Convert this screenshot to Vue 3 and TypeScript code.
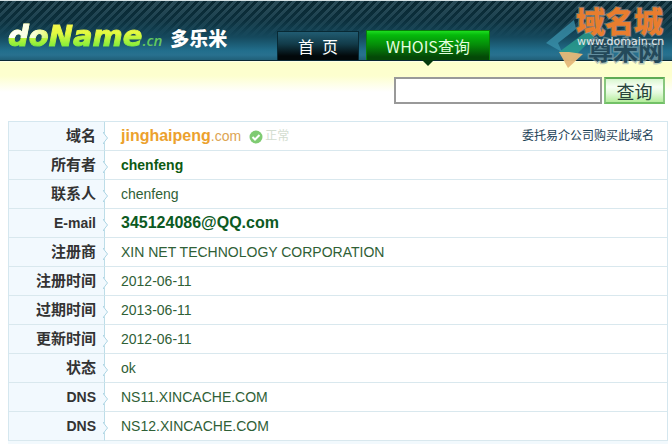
<script setup lang="ts">
import { ref } from 'vue'

interface Row {
  label: string
  value: string
  kind?: 'domain' | 'owner' | 'mail'
  latin?: boolean
}

const query = ref('')
const rows: Row[] = [
  { label: '域名', value: 'jinghaipeng', kind: 'domain' },
  { label: '所有者', value: 'chenfeng', kind: 'owner' },
  { label: '联系人', value: 'chenfeng' },
  { label: 'E-mail', value: '345124086@QQ.com', kind: 'mail', latin: true },
  { label: '注册商', value: 'XIN NET TECHNOLOGY CORPORATION' },
  { label: '注册时间', value: '2012-06-11' },
  { label: '过期时间', value: '2013-06-11' },
  { label: '更新时间', value: '2012-06-11' },
  { label: '状态', value: 'ok' },
  { label: 'DNS', value: 'NS11.XINCACHE.COM', latin: true },
  { label: 'DNS', value: 'NS12.XINCACHE.COM', latin: true },
]
</script>

<template>
  <div class="page">
    <header class="top">
      <a class="logo" href="#">
        <span class="word">doName</span><span class="tld">.cn</span>
        <span class="cname">多乐米</span>
      </a>
      <nav class="tabs">
        <a class="tab" href="#">首&ensp;页</a>
        <a class="tab active" href="#">WHOIS查询</a>
      </nav>
      <svg class="stamp" width="126" height="70" viewBox="0 0 126 70">
        <path d="M28 19L0 42l16 9-4-9 18-14z" fill="#3b93ad" opacity=".75" />
        <path d="M13 51L44 28l4 8-24 24z" fill="#2aa08f" opacity=".8" />
        <path d="M13 51h10l14 2-15 14z" fill="#e6b878" opacity=".95" />
        <text class="mark-b" x="42" y="59">尊米网</text>
        <text class="mark-a" x="30" y="32">域名城</text>
        <text class="mark-url" x="31" y="44">www.domain.cn</text>
      </svg>
    </header>

    <form class="search" @submit.prevent>
      <input v-model="query" class="field" type="text" aria-label="查询域名" />
      <button class="go" type="submit">查询</button>
    </form>

    <main class="panel">
      <table class="info">
        <tbody>
          <tr v-for="(row, i) in rows" :key="i">
            <th scope="row" :class="{ latin: row.latin }">
              {{ row.label }}
              <svg class="notch" width="6" height="12" viewBox="0 0 6 12">
                <path d="M0 0L5 6L0 12z" fill="#f2f9fe" />
                <path d="M.5 0v1l4 5-4 5v1" fill="none" stroke="#b0d6e4" />
              </svg>
            </th>
            <td>
              <div v-if="row.kind === 'domain'" class="line">
                <span class="domain"><b>{{ row.value }}</b>.com</span>
                <svg class="ok" width="14" height="14" viewBox="0 0 14 14">
                  <circle cx="7" cy="7" r="6.500" fill="#7fcb72" />
                  <path d="M3.500 7l2.500 2.500L10.500 5" fill="none" stroke="#fff" stroke-width="2" />
                </svg>
                <span class="state">正常</span>
                <a class="buy" href="#">委托易介公司购买此域名</a>
              </div>
              <span v-else :class="row.kind">{{ row.value }}</span>
            </td>
          </tr>
        </tbody>
      </table>
    </main>
  </div>
</template>

<style>
body {
  margin: 0;
  background: #fff;
}
</style>

<style scoped>
.page {
  font-family: "Liberation Sans", "Noto Sans CJK SC", sans-serif;
  font-size: 14px;
  background: linear-gradient(#fff 61px, #fdffcb 62px, #fdffcf 76px, #fff 92px);
}
a {
  text-decoration: none;
}
.top {
  position: relative;
  display: flex;
  align-items: flex-end;
  box-sizing: border-box;
  height: 61px;
  border-top: 1px solid #d5e0e3;
  border-bottom: 1px solid #0a2933;
  background:
    linear-gradient(rgba(11, 46, 59, 0) 0, rgba(13, 55, 71, 0.5) 20px, #15495d 36px, #226f8d 50px, #28718f 54px, #205f78 59px),
    repeating-linear-gradient(135deg, #0a2832 0, #0a2832 3px, #2b4c58 3px, #2b4c58 6px);
}
.logo {
  display: flex;
  align-items: baseline;
  width: 277px;
  padding-left: 8px;
  box-sizing: border-box;
  white-space: nowrap;
  line-height: 40px;
}
.word {
  font: italic bold 29px/40px "DejaVu Sans", sans-serif;
  color: transparent;
  -webkit-text-stroke: 1px transparent;
  background:
    linear-gradient(90deg, #fff 0, rgba(255, 255, 255, 0.8) 26px, rgba(255, 255, 255, 0) 46px) 0 0 / 100% 22px no-repeat,
    linear-gradient(#f6f64e 8px, #e4fa40 17px, #6eea38 33px);
  -webkit-background-clip: text;
  background-clip: text;
}
.tld {
  font: italic 600 15px/40px "Open Sans", sans-serif;
  color: #63c85e;
}
.cname {
  margin-left: 8px;
  font: 900 19px/40px "Noto Sans CJK SC", sans-serif;
  color: #fff;
}
.tabs {
  display: flex;
  align-items: flex-end;
  gap: 7px;
}
.tab {
  position: relative;
  box-sizing: border-box;
  width: 82px;
  height: 29px;
  border: 1px solid #082934;
  border-bottom: 0;
  background: linear-gradient(#215c72, #123b49 12px, #02080a 24px);
  font-family: "Noto Sans CJK SC", sans-serif;
  font-size: 16px;
  line-height: 28px;
  color: #fff;
  text-align: center;
  white-space: nowrap;
}
.tab.active {
  width: 124px;
  height: 30px;
  border-color: #087c0a;
  background: linear-gradient(#1ddd20, #05b90b 4px, #058b09 14px, #044807 26px);
  line-height: 30px;
  color: #e2ffdf;
}
.tab.active::after {
  content: "";
  position: absolute;
  left: 55px;
  top: 100%;
  border: 6px solid transparent;
  border-top-color: #053a0b;
  border-bottom: 0;
}
.stamp {
  position: absolute;
  right: 0;
  top: 0;
}
.mark-a {
  font: 900 29px "Noto Sans CJK SC", sans-serif;
  fill: #e87d2e;
  stroke: rgba(175, 160, 150, 0.6);
  stroke-width: 2px;
  paint-order: stroke;
}
.mark-b {
  font: 700 25px "Noto Sans CJK SC", sans-serif;
  fill: #24495a;
  stroke: rgba(140, 165, 172, 0.6);
  stroke-width: 3px;
  paint-order: stroke;
}
.mark-url {
  font: 11px "DejaVu Sans", sans-serif;
  fill: #e4e8ea;
}
.search {
  display: flex;
  justify-content: flex-end;
  gap: 2px;
  padding: 16px 7px 17px;
}
.field {
  box-sizing: border-box;
  width: 208px;
  height: 27px;
  padding: 0 4px;
  border: 2px solid #999;
  background: #fff;
  font: inherit;
}
.go {
  box-sizing: border-box;
  width: 61px;
  height: 27px;
  padding: 0;
  border: 2px solid #5fab55;
  border-color: #5fab55 #88c77e #72c167 #88c77e;
  background: linear-gradient(#d9f6d0, #f7fff4 8px, #e3fadb 14px, #b4ec9c);
  font: 18px/22px "Noto Sans CJK SC", sans-serif;
  color: #26423a;
}
.panel {
  margin: 0 4px 0 8px;
  padding-bottom: 3px;
  background: #f2f9fd;
}
.info {
  width: 100%;
  border: 1px solid #d5e7ef;
  border-collapse: separate;
  border-spacing: 0;
  border-bottom: 0;
}
th,
td {
  height: 28px;
  padding: 0;
  border-bottom: 1px solid #d9e8ee;
  line-height: 28px;
  text-align: left;
}
th {
  position: relative;
  width: 87px;
  padding-right: 8px;
  border-right: 1px solid #bddde8;
  background: #f2f9fe;
  font-size: 15px;
  text-align: right;
  color: #333;
}
th.latin {
  font-size: 14px;
}
.notch {
  position: absolute;
  right: -5px;
  top: 10px;
}
td {
  padding: 0 13px 0 16px;
  background: #fff;
  color: #2f6036;
}
.line {
  display: flex;
  align-items: center;
  height: 28px;
}
.domain {
  color: #dda452;
}
.domain b {
  font-size: 16px;
  color: #eca12d;
}
.ok {
  margin: 2px 2px 0 8px;
}
.state {
  font-size: 12px;
  color: #d3ddd0;
}
.buy {
  margin-left: auto;
  font-size: 12px;
  color: #1c4257;
}
.owner {
  font-weight: bold;
  color: #0c5a12;
}
.mail {
  font-size: 16px;
  font-weight: bold;
  color: #0c5a22;
}
</style>
